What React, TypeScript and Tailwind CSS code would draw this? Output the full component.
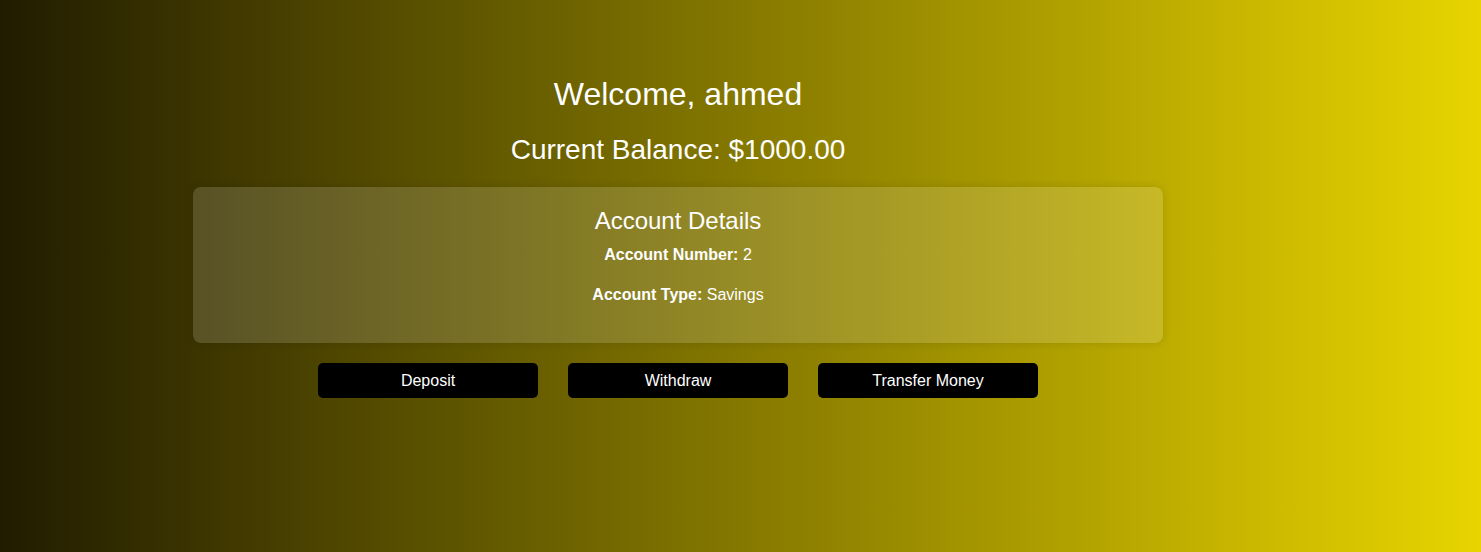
export default function App() {
  const buttons = ['Deposit', 'Withdraw', 'Transfer Money'];

  return (
    <div className="min-h-screen w-full bg-[linear-gradient(to_right,#211c00,#e8d400)] font-['Liberation_Sans',Arial,sans-serif] text-white">
      <div className="w-[1356px] flex flex-col items-center pt-[76px]">
        <h1 className="text-[32px] leading-[37px]">Welcome, ahmed</h1>
        <h2 className="mt-[21px] text-[28px] leading-[32px]">Current Balance: $1000.00</h2>

        <div className="mt-[21px] w-[970px] rounded-lg bg-white/15 shadow-[0_0_10px_rgba(0,0,0,0.12)] pt-[20px] pb-[39px] flex flex-col items-center">
          <h3 className="text-[24px] leading-[28px]">Account Details</h3>
          <p className="mt-[11px] text-base leading-[18px]">
            <strong className="font-bold">Account Number:</strong> 2
          </p>
          <p className="mt-[22px] text-base leading-[18px]">
            <strong className="font-bold">Account Type:</strong> Savings
          </p>
        </div>

        <div className="mt-[20px] flex gap-[30px]">
          {buttons.map((label) => (
            <button
              key={label}
              className="w-[220px] h-[35px] rounded-[5px] bg-black text-white text-base"
            >
              {label}
            </button>
          ))}
        </div>
      </div>
    </div>
  );
}
